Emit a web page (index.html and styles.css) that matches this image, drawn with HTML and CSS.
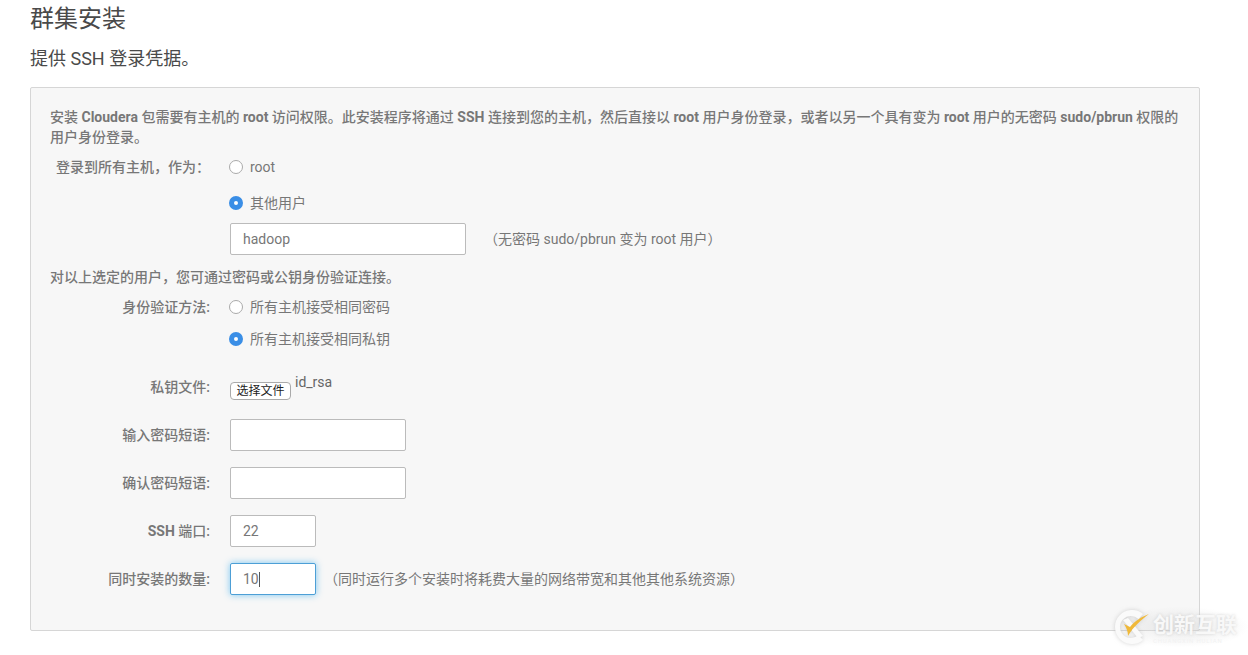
FILE: index.html
```html
<!DOCTYPE html>
<html lang="zh-CN">
<head>
<meta charset="utf-8">
<title>群集安装</title>
<link rel="stylesheet" href="styles.css">
</head>
<body>
<main class="page">
  <h1 class="title">群集安装</h1>
  <p class="subtitle">提供 SSH 登录凭据。</p>
  <form class="well">
    <p class="intro">安装 <b>Cloudera</b> 包需要有主机的 <b>root</b> 访问权限。此安装程序将通过 <b>SSH</b> 连接到您的主机，然后直接以 <b>root</b> 用户身份登录，或者以另一个具有变为 <b>root</b> 用户的无密码 <b>sudo/pbrun</b> 权限的用户身份登录。</p>
    <div class="row row-login">
      <span class="label">登录到所有主机，作为：</span>
      <label class="choice"><span class="radio"></span>root</label>
    </div>
    <div class="row row-other">
      <span class="label"></span>
      <label class="choice"><span class="radio on"></span>其他用户</label>
    </div>
    <div class="row row-user">
      <span class="label"></span>
      <input class="field wide" type="text" value="hadoop">
      <span class="hint hint-user">（无密码 sudo/pbrun 变为 root 用户）</span>
    </div>
    <p class="note">对以上选定的用户，您可通过密码或公钥身份验证连接。</p>
    <div class="row row-auth">
      <span class="label">身份验证方法:</span>
      <label class="choice"><span class="radio"></span>所有主机接受相同密码</label>
    </div>
    <div class="row row-auth2">
      <span class="label"></span>
      <label class="choice"><span class="radio on"></span>所有主机接受相同私钥</label>
    </div>
    <div class="row row-file">
      <span class="label">私钥文件:</span>
      <span class="file-button">选择文件</span>
      <span class="file-name">id_rsa</span>
    </div>
    <div class="row row-input">
      <span class="label">输入密码短语:</span>
      <input class="field medium" type="password">
    </div>
    <div class="row row-input">
      <span class="label">确认密码短语:</span>
      <input class="field medium" type="password">
    </div>
    <div class="row row-input">
      <span class="label"><b>SSH</b> 端口:</span>
      <input class="field small" type="text" value="22">
    </div>
    <div class="row row-input">
      <span class="label">同时安装的数量:</span>
      <span class="field small focused">10<span class="caret"></span></span>
      <span class="hint hint-count">（同时运行多个安装时将耗费大量的网络带宽和其他其他系统资源）</span>
    </div>
  </form>
</main>
<div class="watermark">
  <svg class="wm-logo" width="40" height="40" viewBox="0 0 40 40" aria-hidden="true">
    <path d="M31 7A17 17 0 1 0 31 33L26.500 28A11 11 0 1 1 26.500 12Z" fill="#fafafa"/>
    <path d="M11 13L16 11 31 29 26 31Z" fill="#fafafa"/>
    <path d="M37 7C29 10 23 14 18 20L12 17C14 20 16 24 16 29C21 20 29 13 37 7Z" fill="#f0b93a"/>
  </svg>
  <div class="wm-text">
    <span class="wm-name">创新互联</span>
    <span class="wm-sub">CHUANGXIN HULIAN</span>
  </div>
</div>
</body>
</html>
```
FILE: styles.css
```css
* { box-sizing: border-box; }
html, body { margin: 0; padding: 0; background: #fff; overflow: hidden; }
body {
  width: 1248px;
  height: 655px;
  font-family: Roboto, "Noto Sans CJK SC", sans-serif;
  font-size: 14px;
  line-height: 20px;
  color: #777;
  position: relative;
}
b { font-weight: 700; }
.page { padding: 0 48px 0 30px; }
.title {
  margin: 0;
  padding-top: 4px;
  height: 46px;
  font-size: 24px;
  line-height: 30px;
  font-weight: 400;
  color: #4a4a4a;
}
.subtitle {
  margin: 0;
  height: 41px;
  font-size: 18px;
  line-height: 26px;
  color: #4a4a4a;
}
.well {
  height: 544px;
  padding: 19px;
  background: #f7f7f7;
  border: 1px solid #d6d6d6;
  border-radius: 2px;
}
.intro, .note { margin: 0; font-weight: 500; color: #777; }
.row { display: flex; align-items: center; }
.label {
  flex: none;
  width: 160px;
  margin-right: 20px;
  text-align: right;
  font-weight: 500;
  color: #777;
}
.row-login { height: 40px; }
.row-other { height: 32px; }
.row-user { height: 32px; margin-top: 4px; margin-bottom: 10px; }
.note { height: 24px; line-height: 24px; }
.row-auth { height: 36px; }
.row-auth2 { height: 28px; }
.row-file { height: 32px; margin-top: 18px; align-items: flex-start; }
.row-file .label { line-height: 32px; }
.row-input { height: 32px; margin-top: 16px; }
.choice { display: flex; align-items: center; font-weight: 400; color: #777; margin-left: -1px; }
.radio {
  width: 14px;
  height: 14px;
  margin-right: 7px;
  border: 1px solid #aaa;
  border-radius: 50%;
  background: #fff;
  flex: none;
}
.radio.on { border: 5px solid #3a8ee6; background: #fff; }
.field {
  display: block;
  flex: none;
  height: 32px;
  padding: 0 12px;
  font-family: inherit;
  font-size: 14px;
  line-height: 30px;
  color: #777;
  background: #fff;
  border: 1px solid #bbb;
  border-radius: 2px;
  outline: none;
}
.wide { width: 236px; }
.medium { width: 176px; }
.small { width: 86px; }
.focused { border-color: #4d9fd6; box-shadow: 0 0 7px rgba(102, 190, 240, .85); }
.caret { display: inline-block; width: 1px; height: 15px; background: #555; vertical-align: -3px; }
.hint { color: #777; }
.hint-user { margin-left: 18px; }
.hint-count { margin-left: 8px; }
.file-button {
  flex: none;
  width: 61px;
  height: 18px;
  margin-top: 11px;
  font-size: 12px;
  line-height: 17px;
  text-align: center;
  color: #222;
  background: #fff;
  border: 1px solid #aaa;
  border-radius: 4px;
}
.file-name { margin-left: 4px; margin-top: 1px; color: #666; }
.watermark {
  position: absolute;
  left: 1112px;
  top: 607px;
  display: flex;
  align-items: center;
  width: 136px;
  height: 40px;
  background: radial-gradient(ellipse at center, rgba(215, 215, 215, .55), rgba(255, 255, 255, 0) 72%);
}
.wm-logo { flex: none; filter: drop-shadow(0 0 2px rgba(170, 170, 170, .5)); }
.wm-text { display: flex; flex-direction: column; margin-left: 1px; margin-top: 3px; }
.wm-name { font-size: 21px; line-height: 23px; font-weight: 700; color: #f8f8f8; text-shadow: 0 0 3px rgba(170, 170, 170, .45); white-space: nowrap; }
.wm-sub { font-size: 6px; line-height: 7px; color: #f2f2f2; letter-spacing: .8px; white-space: nowrap; }
```
